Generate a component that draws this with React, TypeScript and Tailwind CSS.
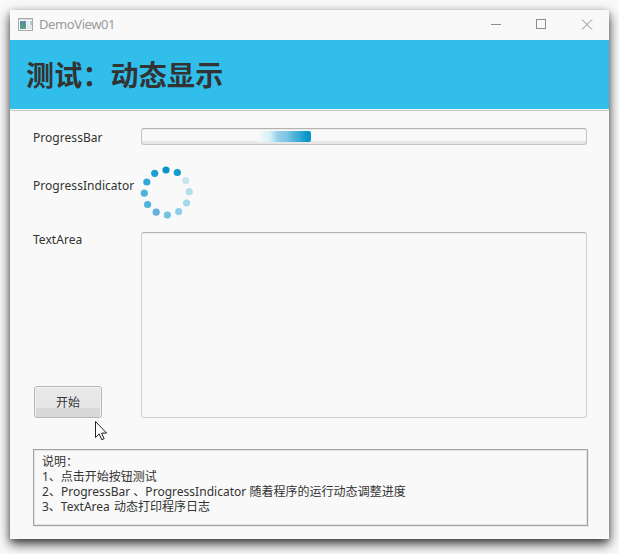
import type { ReactNode } from "react";

const indicatorDots = [
  { x: 26, y: 8, color: "#0896c9" },
  { x: 37.3, y: 10.5, color: "#0e9bce" },
  { x: 45.8, y: 18.5, color: "#c8e4ee" },
  { x: 49.2, y: 29.7, color: "#b4dded" },
  { x: 46.6, y: 41, color: "#a5d8e9" },
  { x: 38.7, y: 49.6, color: "#90cdeb" },
  { x: 27.4, y: 53, color: "#72c2e0" },
  { x: 16.2, y: 50.2, color: "#62b0dc" },
  { x: 7.6, y: 42.5, color: "#4eb3d9" },
  { x: 4.3, y: 31.2, color: "#4fb3d8" },
  { x: 6.8, y: 20, color: "#33a9d6" },
  { x: 14.7, y: 11.3, color: "#1da0d1" },
];

function AppIcon() {
  return (
    <svg width="16" height="14" viewBox="0 0 16 14" shapeRendering="crispEdges">
      <defs>
        <linearGradient id="app-icon" x1="0" y1="0" x2="0.4" y2="1">
          <stop offset="0" stopColor="#5585b4" />
          <stop offset="1" stopColor="#55a47c" />
        </linearGradient>
      </defs>
      <rect x="0.5" y="0.5" width="14" height="12" fill="#fafafa" stroke="#a5a9ac" />
      <rect x="1" y="1" width="13" height="1" fill="#d9dde0" />
      <rect x="2" y="3" width="6" height="8" fill="url(#app-icon)" />
      <rect x="9" y="3" width="2" height="8" fill="#e3e8eb" />
      <rect x="12" y="3" width="2" height="4" fill="#a7cfc8" />
      <rect x="11" y="7" width="3" height="4" fill="#e3e8eb" />
    </svg>
  );
}

function TitleBar() {
  return (
    <div className="flex h-[30px] items-center pl-2">
      <AppIcon />
      <span className="ml-[5px] text-[13px] tracking-[-0.4px] text-[#999]">DemoView01</span>
      <svg className="ml-auto" width="128" height="30" fill="none" stroke="#8c8c8c">
        <path d="M10 14.5h10" />
        <rect x="55.5" y="9.5" width="9" height="9" />
        <path d="M101 9.5l10 10M111 9.5l-10 10" />
      </svg>
    </div>
  );
}

function Label({ children }: { children: ReactNode }) {
  return (
    <span className="block text-[12px] leading-4 tracking-[0.04px] whitespace-nowrap text-[#333]">
      {children}
    </span>
  );
}

function ProgressBar() {
  return (
    <div className="flex h-[17px] rounded-[3px] border border-[#c4c4c4] border-t-[#b4b4b4] bg-[linear-gradient(#e9e9e9_1px,#f9f9f9_1px,#f9f9f9_12px,#e6e6e6_12px)] pt-[2px] pl-[116px]">
      <div className="h-[11px] w-[53px] rounded-r-[2px] bg-[linear-gradient(to_right,#f9f9f9,#d5f0f5_12px,#94cfec_20px,#7cc5e4_29px,#4fb4da_36px,#35a9d5_42px,#0896c9_49px)]" />
    </div>
  );
}

function ProgressIndicator() {
  return (
    <svg width="54" height="58" viewBox="0 0 54 58">
      {indicatorDots.map((dot, i) => (
        <circle key={i} cx={dot.x} cy={dot.y} r="3.6" fill={dot.color} />
      ))}
    </svg>
  );
}

function Pointer() {
  return (
    <svg className="absolute top-[411px] left-[85px]" width="13" height="20" viewBox="0 0 13 20">
      <path
        d="M.5.5v16l3.7-3.6 2.5 5.8 2.4-1-2.5-5.6h5z"
        fill="#fff"
        stroke="#222"
        strokeWidth="1"
      />
    </svg>
  );
}

export default function App() {
  return (
    <div className="h-[554px] w-[619px] overflow-hidden bg-[#f9f9f9] p-[10px] pb-[15px] font-['Noto_Sans','Noto_Sans_CJK_SC',sans-serif]">
      <div className="relative flex h-[529px] w-[599px] flex-col bg-[#f9f9f9] shadow-[0_5px_11px_rgba(0,0,0,0.75),0_2px_5px_rgba(0,0,0,0.2)]">
        <TitleBar />
        <div className="flex h-[69px] items-center bg-[#31beeb] pl-4">
          <h1 className="-mt-0.5 text-[28px] leading-9 font-bold tracking-[0.2px] text-[#333] [font-family:'Noto_Sans_CJK_SC',sans-serif]">
            测试：动态显示
          </h1>
        </div>
        <div className="mt-px h-px bg-[#c8c8c8]" />

        <div className="grid grid-cols-[108px_446px] pt-[17px] pl-[23px]">
          <div className="h-[34px] pt-[2px]">
            <Label>ProgressBar</Label>
          </div>
          <ProgressBar />
          <div className="h-[70px] pt-4">
            <Label>ProgressIndicator</Label>
          </div>
          <div className="-ml-px">
            <ProgressIndicator />
          </div>
          <div className="flex h-[186px] flex-col items-start justify-between">
            <Label>TextArea</Label>
            <button className="ml-px h-8 w-[68px] rounded-[3px] border border-[#b8b8b8] bg-[linear-gradient(#f5f5f5_1px,#e8e8e8_1px,#e6e6e6_21px,#d8d8d8_21px)] text-[12px] text-[#333] shadow-[inset_1px_0_#efefef,inset_-1px_0_#efefef]">
              <span className="block pt-px">开始</span>
            </button>
          </div>
          <div className="h-[186px] rounded-[3px] border border-[#d0d0d0] border-t-[#b2b2b2] shadow-[inset_0_1px_#ececec]" />
        </div>

        <div className="mt-[31px] ml-[23px] h-[77px] w-[555px] border border-[#a3a3a3] px-2 pt-1 text-[12px] leading-[15px] text-[#333] shadow-[inset_0_0_0_1px_#e3e3e3,1px_1px_#e8e8e8]">
          <p>说明：</p>
          <p>1、点击开始按钮测试</p>
          <p className="tracking-[0.02px]">
            2、ProgressBar 、ProgressIndicator 随着程序的运行动态调整进度
          </p>
          <p className="[word-spacing:1px]">3、TextArea 动态打印程序日志</p>
        </div>

        <Pointer />
      </div>
    </div>
  );
}
